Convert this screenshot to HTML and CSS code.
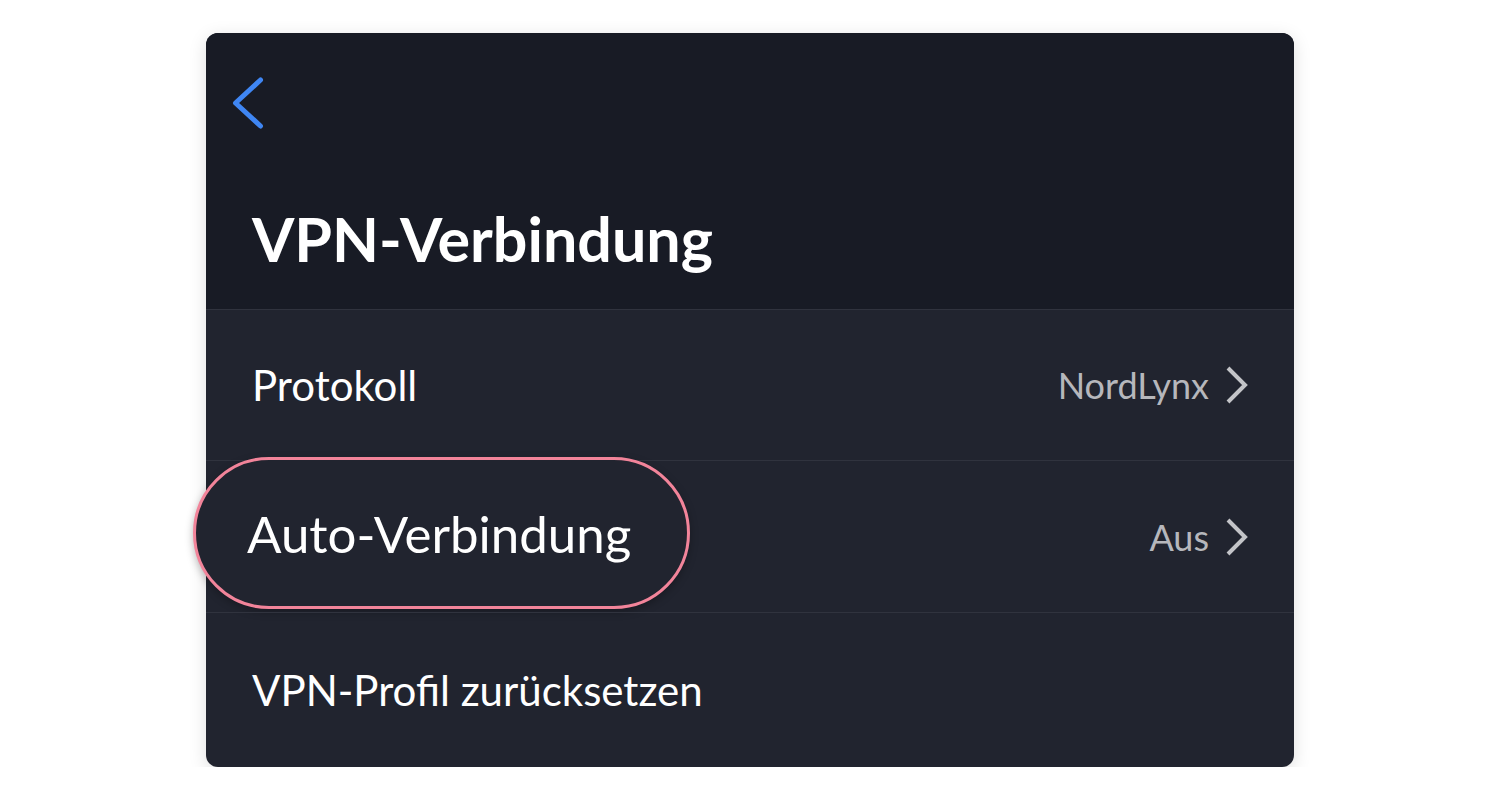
FILE: index.html
```html
<!DOCTYPE html>
<html lang="de">
<head>
<meta charset="utf-8">
<title>VPN-Verbindung</title>
<link rel="stylesheet" href="styles.css">
</head>
<body>
<div class="card">
  <header class="header">
    <svg class="back" width="32" height="52" viewBox="0 0 32 52" aria-hidden="true">
      <path d="M28.5 3 L3.5 26 L28.5 49" fill="none" stroke="#3f86f3" stroke-width="5" stroke-linecap="round" stroke-linejoin="round"/>
    </svg>
    <h1 class="title">VPN-Verbindung</h1>
  </header>
  <div class="row">
    <span class="label">Protokoll</span>
    <span class="value">NordLynx
      <svg class="chev" width="24" height="38" viewBox="0 0 24 38" aria-hidden="true"><path d="M3 2 L20 19 L3 36" fill="none" stroke="#c3c4c8" stroke-width="4"/></svg>
    </span>
  </div>
  <div class="row row-focus">
    <div class="pill"><span class="pill-label">Auto-Verbindung</span></div>
    <span class="value">Aus
      <svg class="chev" width="24" height="38" viewBox="0 0 24 38" aria-hidden="true"><path d="M3 2 L20 19 L3 36" fill="none" stroke="#c3c4c8" stroke-width="4"/></svg>
    </span>
  </div>
  <div class="row row-last">
    <span class="label">VPN-Profil zurücksetzen</span>
  </div>
</div>
</body>
</html>
```
FILE: styles.css
```css
html, body {
  margin: 0;
  padding: 0;
  background: #ffffff;
}
body {
  font-family: Lato, "Noto Sans", sans-serif;
  padding-top: 33px;
}
.card {
  width: 1088px;
  height: 734px;
  margin: 0 auto;
  display: flex;
  flex-direction: column;
  border-radius: 12px;
  background: #21242f;
  box-shadow: 0 4px 18px rgba(0, 0, 0, 0.13);
}
.header {
  height: 276px;
  box-sizing: border-box;
  background: #181b25;
  border-radius: 12px 12px 0 0;
  padding: 44px 0 0 26px;
  display: flex;
  flex-direction: column;
}
.back {
  display: block;
}
.title {
  margin: 79px 0 0 20px;
  font-size: 61px;
  line-height: 1;
  font-weight: 700;
  color: #ffffff;
}
.row {
  height: 151px;
  box-sizing: border-box;
  border-top: 1px solid #30333e;
  padding: 0 45px 0 46px;
  display: flex;
  align-items: center;
  justify-content: space-between;
  position: relative;
}
.row-last {
  flex: 1;
  border-radius: 0 0 12px 12px;
}
.row-focus {
  justify-content: flex-end;
  height: 152px;
}
.label {
  font-size: 42px;
  color: #ffffff;
}
.value {
  display: flex;
  align-items: center;
  gap: 16px;
  font-size: 36px;
  color: #b6b7bc;
}
.chev {
  display: block;
}
.pill {
  position: absolute;
  left: -13px;
  top: -4px;
  width: 497px;
  height: 152px;
  box-sizing: border-box;
  border: 3px solid #f2849a;
  border-radius: 76px;
  background: #21242f;
  box-shadow: 0 3px 8px rgba(0, 0, 0, 0.28);
  display: flex;
  align-items: center;
  padding-left: 51px;
}
.pill-label {
  font-size: 51px;
  color: #ffffff;
}
```
